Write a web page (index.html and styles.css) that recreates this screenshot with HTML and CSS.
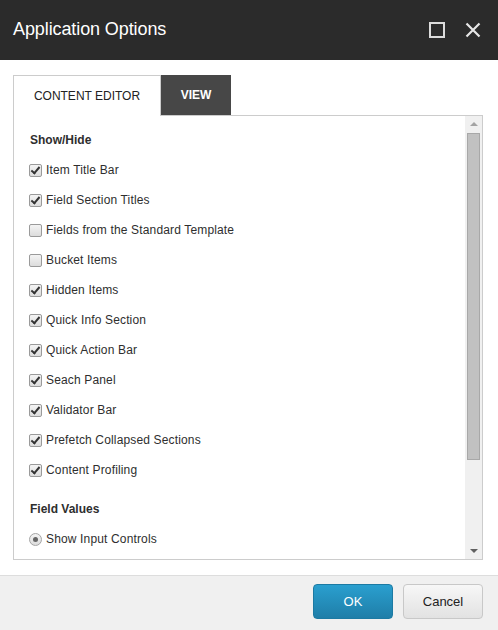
FILE: index.html
```html
<!DOCTYPE html>
<html>
<head>
<meta charset="utf-8">
<link rel="stylesheet" href="styles.css">
</head>
<body>
<div class="dialog">
  <div class="header">
    <div class="title">Application Options</div>
    <div class="hicons">
      <svg class="hicon" width="16" height="16" viewBox="0 0 16 16"><rect x="1" y="1" width="14" height="14" fill="none" stroke="#dcdcdc" stroke-width="2"/></svg>
      <svg class="hicon" width="16" height="16" viewBox="0 0 16 16"><path d="M1.5 1.5 L14.5 14.5 M14.5 1.5 L1.5 14.5" stroke="#e6e6e6" stroke-width="2.2" fill="none"/></svg>
    </div>
  </div>
  <div class="main">
    <div class="tabs">
      <div class="tab tab-light">CONTENT EDITOR</div>
      <div class="tab tab-dark">VIEW</div>
      <div class="tab-fill"></div>
    </div>
    <div class="panel">
      <div class="content">
        <div class="section">Show/Hide</div>
        <div class="row"><span class="cb on"></span>Item Title Bar</div>
        <div class="row"><span class="cb on"></span>Field Section Titles</div>
        <div class="row"><span class="cb"></span>Fields from the Standard Template</div>
        <div class="row"><span class="cb"></span>Bucket Items</div>
        <div class="row"><span class="cb on"></span>Hidden Items</div>
        <div class="row"><span class="cb on"></span>Quick Info Section</div>
        <div class="row"><span class="cb on"></span>Quick Action Bar</div>
        <div class="row"><span class="cb on"></span>Seach Panel</div>
        <div class="row"><span class="cb on"></span>Validator Bar</div>
        <div class="row"><span class="cb on"></span>Prefetch Collapsed Sections</div>
        <div class="row"><span class="cb on"></span>Content Profiling</div>
        <div class="section section-gap">Field Values</div>
        <div class="row"><span class="radio on"></span>Show Input Controls</div>
      </div>
      <div class="scrollbar">
        <div class="arrow arrow-up"></div>
        <div class="thumb"></div>
        <div class="track"></div>
        <div class="arrow arrow-down"></div>
      </div>
    </div>
  </div>
  <div class="footer">
    <button class="btn btn-ok">OK</button>
    <button class="btn btn-cancel">Cancel</button>
  </div>
</div>
</body>
</html>
```

FILE: styles.css
```css
html, body {
  margin: 0;
  padding: 0;
  background: #ffffff;
  font-family: "Liberation Sans", Arial, sans-serif;
}
.dialog {
  width: 498px;
  height: 630px;
  display: flex;
  flex-direction: column;
}
.header {
  height: 60px;
  background: #2b2b2b;
  display: flex;
  align-items: center;
  justify-content: space-between;
  padding: 0 17px 0 13px;
  box-sizing: border-box;
  flex: none;
}
.title {
  color: #ffffff;
  font-size: 18px;
  margin-top: -1px;
  letter-spacing: -0.1px;
}
.hicons {
  display: flex;
  gap: 20px;
  align-items: center;
}
.hicon { display: block; }
.main {
  padding: 15px 15px 0 13px;
  flex: none;
}
.tabs {
  display: flex;
  height: 40px;
}
.tab {
  font-size: 12px;
  display: flex;
  align-items: center;
  justify-content: center;
  box-sizing: border-box;
}
.tab-light {
  width: 148px;
  border: 1px solid #cccccc;
  border-bottom: none;
  background: #fff;
  color: #222;
  position: relative;
  z-index: 1;
  height: 41px;
}
.tab-dark {
  width: 70px;
  background: #474747;
  color: #ffffff;
  font-weight: bold;
  height: 40px;
}
.tab-fill { flex: 1; }
.panel {
  border: 1px solid #cccccc;
  height: 445px;
  box-sizing: border-box;
  display: flex;
}
.content {
  flex: 1;
  padding: 9px 0 0 15px;
  overflow: hidden;
  font-size: 12px;
  color: #2e2e2e;
  letter-spacing: 0.15px;
}
.section {
  height: 30px;
  line-height: 30px;
  font-weight: bold;
  padding-left: 1px;
  letter-spacing: 0;
}
.section-gap { margin-top: 9px; }
.row {
  height: 30px;
  display: flex;
  align-items: center;
  gap: 4px;
}
.cb {
  width: 13px;
  height: 13px;
  box-sizing: border-box;
  border: 1px solid #9a9a9a;
  border-radius: 2px;
  background: linear-gradient(#f4f4f4, #dcdcdc);
  position: relative;
  flex: none;
}
.cb.on::after {
  content: "";
  position: absolute;
  left: 3px;
  top: 0px;
  width: 3px;
  height: 7px;
  border-right: 2px solid #333;
  border-bottom: 2px solid #333;
  transform: rotate(40deg);
}
.radio {
  width: 13px;
  height: 13px;
  box-sizing: border-box;
  border: 1px solid #a5a5a5;
  border-radius: 50%;
  background: linear-gradient(#f4f4f4, #dcdcdc);
  position: relative;
  flex: none;
}
.radio.on::after {
  content: "";
  position: absolute;
  left: 3px;
  top: 3px;
  width: 5px;
  height: 5px;
  border-radius: 50%;
  background: #666;
}
.scrollbar {
  width: 17px;
  background: #f0f0f0;
  display: flex;
  flex-direction: column;
  align-items: center;
  flex: none;
}
.arrow {
  height: 17px;
  width: 17px;
  position: relative;
  flex: none;
}
.arrow-up::after, .arrow-down::after {
  content: "";
  position: absolute;
  left: 5px;
  border-left: 4px solid transparent;
  border-right: 4px solid transparent;
}
.arrow-up::after {
  top: 6px;
  border-bottom: 4px solid #a3a3a3;
}
.arrow-down::after {
  top: 7px;
  border-top: 4px solid #606060;
}
.thumb {
  width: 13px;
  height: 327px;
  box-sizing: border-box;
  background: #c1c1c1;
  border: 1px solid #a8a8a8;
  flex: none;
}
.track { flex: 1; }
.footer {
  margin-top: 15px;
  flex: 1;
  background: #f0f0f0;
  border-top: 1px solid #dddddd;
  display: flex;
  justify-content: flex-end;
  align-items: flex-start;
  gap: 10px;
  padding: 8px 15px 0 0;
}
.btn {
  width: 80px;
  height: 35px;
  border-radius: 4px;
  font-family: "Liberation Sans", Arial, sans-serif;
  font-size: 13px;
  cursor: pointer;
}
.btn-ok {
  background: linear-gradient(#2a9fcf, #1f7ea8);
  border: 1px solid #1c7aa3;
  color: #ffffff;
}
.btn-cancel {
  background: linear-gradient(#f7f7f7, #e2e2e2);
  border: 1px solid #c8c8c8;
  color: #222;
}
```
